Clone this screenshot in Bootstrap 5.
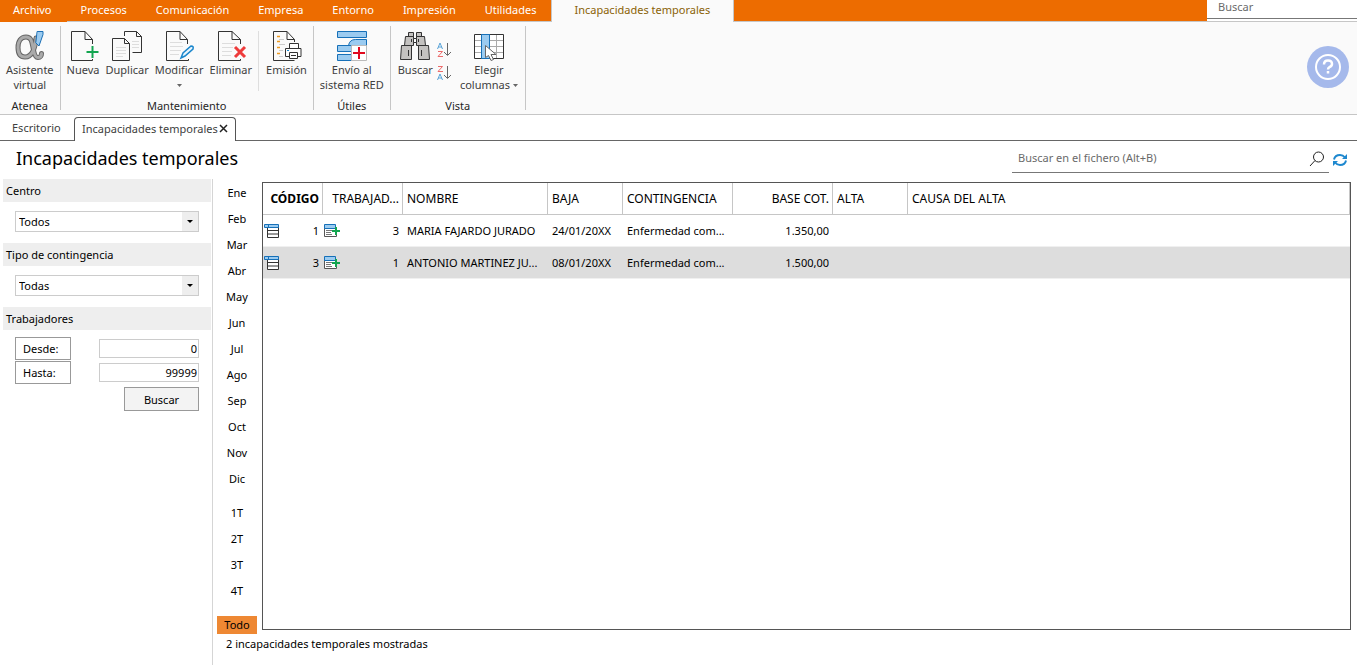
<!DOCTYPE html>
<html lang="es">
<head>
<meta charset="utf-8">
<meta name="viewport" content="width=device-width, initial-scale=1">
<title>Incapacidades temporales</title>
<link href="https://cdn.jsdelivr.net/npm/bootstrap@5.3.0/dist/css/bootstrap.min.css" rel="stylesheet">
<style>
:root { --naranja: #ed6c00; --linea: #c6c6c6; --oscuro: #666; --gris: #eee; }
body { font-family: "Noto Sans", "Open Sans", sans-serif; font-size: 11px; line-height: 15px; color: #000; background: #fff; }
button, input, select { font: inherit; color: inherit; }
button { background: none; border: 0; padding: 0; }
svg { display: block; flex: none; }

.menubar { height: 22px; background: var(--naranja); border-bottom: 1px solid var(--linea); }
.menubar .nav-link { color: #fff; line-height: 16px; padding: 2px 15px 3px 14px; height: 21px; }
.menubar .nav-link.archivo { background: var(--naranja); height: 22px; padding-left: 13px; }
.menubar .nav-link.active { background: #fafafa; color: #8a6206; padding: 2px 23px 3px 22px; height: 22px; border: 1px solid var(--linea); border-width: 0 1px; }
.global-box { width: 150px; background: #fff; }
.global-box input { width: 100%; height: 19px; border: 0; border-bottom: 1px solid #777; padding: 0 11px 5px; display: block; border-radius: 0; }
input::placeholder { color: #6a6a6a; opacity: 1; }

.ribbon { background: #fafafa; border-bottom: 1px solid var(--linea); padding: 4px 0; height: 93px; color: #404040; }
.rgroup { border-right: 1px solid var(--linea); height: 84px; padding: 0 3px; }
.rgroup.wide { padding: 0 4px; }
.rgroup .caption { color: #262626; line-height: 9px; }
.rbtn { display: flex; flex-direction: column; align-items: center; padding: 4px 3px 0; line-height: 15px; }
.rsep { width: 1px; height: 60px; background: #dedede; margin: 5px 4px 0 3px; }
.help { width: 42px; height: 42px; border-radius: 50%; background: #a5b9eb; margin: 0 8px 2px 0; }

.doc-tabs { height: 26px; border-bottom: 1px solid var(--oscuro); padding-top: 2px; color: #404040; }
.doc-tabs a { color: inherit; text-decoration: none; }
.doc-tabs .inactive { width: 74px; padding: 3px 0 0 12px; }
.doc-tabs .current { height: 24px; border: 1px solid #555; border-bottom: 0; border-radius: 4px 4px 0 0; background: #fff; padding: 0 7px 3px; gap: 1px; }

.titlebar { height: 38px; padding: 0 10px 0 16px; }
.titlebar h1 { font-size: 18px; line-height: 24px; margin: 0 0 4px; font-weight: 400; }
.file-search { width: 317px; height: 28px; border-bottom: 1px solid #777; margin-bottom: 2px; }
.file-search input { border: 0; outline: 0; padding: 0 6px 2px; background: none; }

.filters { width: 213px; border-right: 1px solid #d5d5d5; padding-left: 3px; }
.filters h2 { background: var(--gris); font-size: 11px; line-height: 23px; font-weight: 400; margin: 0; padding-left: 3px; margin-right: 1px; }
.filters h2 label { display: block; }
.block { padding: 9px 13px 11px 12px; }
.block.ranges { padding-top: 7px; gap: 1px; }
.combo { appearance: none; display: block; width: 100%; height: 21px; border: 1px solid #ccc; border-radius: 0; padding: 0 3px;
  background: url("data:image/svg+xml,%3Csvg xmlns='http://www.w3.org/2000/svg' width='16' height='19'%3E%3Cpath fill='%23eee' d='M0 0h16v19H0z'/%3E%3Cpath d='M5 8h6l-3 3z'/%3E%3C/svg%3E") right center no-repeat #fff; }
.framed { border: 1px solid #999; background: #fff; height: 23px; }
.framed.label-btn { width: 56px; text-align: left; padding-left: 7px; }
.framed.go { width: 75px; height: 24px; background: #f3f3f3; margin-top: 2px; }
.num { width: 100px; height: 19px; border: 1px solid #ccc; text-align: right; padding: 0 1px; border-radius: 0; }

.periods { width: 49px; padding: 5px 1px 0 0; margin-bottom: -4px; }
.periods button { width: 40px; height: 18px; margin-bottom: 8px; line-height: 18px; }
.periods .gap-after { margin-bottom: 16px; }
.periods .selected { background: #ee8833; margin-bottom: 0; }

.grid-box { border: 1px solid #555; margin: 3px 6px 0 0; }
.grid-box table { width: 100%; table-layout: fixed; border-collapse: separate; border-spacing: 0; }
.grid-box th, .grid-box td { height: 32px; padding: 0 4px; overflow: hidden; white-space: nowrap; text-overflow: ellipsis; }
.grid-box th { font-weight: 400; font-size: 12px; padding-right: 3px; border-right: 1px solid var(--linea); border-bottom: 1px solid var(--linea); }
.grid-box td { border-bottom: 1px solid #f0f0f0; }
.grid-box tr.marked td { background: #ddd; }
.grid-box td.with-icon { padding-left: 1px; }
.status { line-height: 15px; padding: 6px 0 14px 13px; }
</style>
</head>
<body class="d-flex flex-column vh-100 overflow-hidden">

<header class="menubar d-flex flex-shrink-0">
  <nav class="nav flex-nowrap flex-grow-1">
    <a class="nav-link archivo" href="#">Archivo</a>
    <a class="nav-link" href="#">Procesos</a>
    <a class="nav-link" href="#">Comunicación</a>
    <a class="nav-link" href="#">Empresa</a>
    <a class="nav-link" href="#">Entorno</a>
    <a class="nav-link" href="#">Impresión</a>
    <a class="nav-link" href="#">Utilidades</a>
    <a class="nav-link active" href="#" aria-current="page">Incapacidades temporales</a>
  </nav>
  <div class="global-box"><input type="search" placeholder="Buscar" aria-label="Buscar"></div>
</header>

<section class="ribbon d-flex flex-shrink-0" aria-label="Cinta de opciones">
  <div class="rgroup d-flex flex-column justify-content-between align-items-center">
    <button class="rbtn" type="button">
      <svg width="32" height="32" viewBox="0 0 32 32" fill="none" stroke-linecap="round">
        <path d="M22 8C21.500 18 18 27 11 27C6 27 4 23 4 17.500C4 11 7 7 12 7C18 7 18 13 19.500 20C20.500 25 21.500 27.500 24 27.500C26.500 27.500 27.500 25.500 27.500 23.500" stroke="#666" stroke-width="5"/>
        <path d="M22 8C21.500 18 18 27 11 27C6 27 4 23 4 17.500C4 11 7 7 12 7C18 7 18 13 19.500 20C20.500 25 21.500 27.500 24 27.500C26.500 27.500 27.500 25.500 27.500 23.500" stroke="#aaa" stroke-width="3"/>
        <path d="M23.500 1.500h5.500v3L25 16l-3-3z" fill="#9bcbf0" stroke="#1b6fb5"/>
      </svg>
      <span>Asistente<br>virtual</span>
    </button>
    <div class="caption">Atenea</div>
  </div>

  <div class="rgroup d-flex flex-column justify-content-between align-items-center">
    <div class="d-flex">
      <button class="rbtn" type="button">
        <svg width="32" height="32" viewBox="0 0 32 32" fill="none">
          <path d="M25.500 14V9.500L18 1.500H4.500v29h21V29M18 1.500v8h7.500" stroke="#333"/>
          <path d="M25.500 16v12M19.500 22h12" stroke="#13a550" stroke-width="2"/>
        </svg>Nueva
      </button>
      <button class="rbtn" type="button">
        <svg width="32" height="32" viewBox="0 0 32 32" fill="none">
          <path d="M13.500 6V1.500h12l5 5v16h-9M25.500 1.500v5h5M1.500 8.500h12l5 5v17h-17zM13.500 8.500v5h5" stroke="#333"/>
          <path d="M5 17.500h10M5 20.500h10M5 23.500h10M5 26.500h7M21 11.500h7M21 14.500h7M21 17.500h7" stroke="#ddd"/>
        </svg>Duplicar
      </button>
      <button class="rbtn" type="button">
        <svg width="32" height="32" viewBox="0 0 32 32" fill="none">
          <path d="M24.500 14V9.500L17 1.500H3.500v29h22V29M17 1.500v8h7.500" stroke="#333"/>
          <path d="M7 12.500h12M7 16.500h13M7 20.500h11M7 24.500h9" stroke="#ddd"/>
          <path d="M18 28l2-5 8-7q3 0 2 3l-8 7z" fill="#e8f4fc" stroke="#1a86cc" stroke-width="1.500"/>
        </svg>Modificar
        <svg width="5" height="15" viewBox="0 0 5 15"><path d="M0 7h5L2.500 10z" fill="#666"/></svg>
      </button>
      <button class="rbtn" type="button">
        <svg width="32" height="32" viewBox="0 0 32 32" fill="none">
          <path d="M25.500 14V9.500L17 1.500H3.500v29h22V29M17 1.500v8h8.500" stroke="#333"/>
          <path d="M7 13.500h13M7 17.500h11M7 21.500h10M7 25.500h9" stroke="#ddd"/>
          <path d="M20 17l10 10M30 17l-10 10" stroke="#ee3b3b" stroke-width="3"/>
        </svg>Eliminar
      </button>
      <div class="rsep"></div>
      <button class="rbtn" type="button">
        <svg width="32" height="32" viewBox="0 0 32 32" fill="none">
          <path d="M24.500 12V9.500L17 1.500H3.500v29h21M17 1.500v8h7.500" stroke="#333"/>
          <path d="M7 6.500h3M7 11.500h3M7 17.500h3M7 23.500h3" stroke="#ee9a20" stroke-width="1.500"/>
          <path d="M9 9.500h5M9 14.500h6M9 20.500h4M9 26.500h4" stroke="#ccc"/>
          <path d="M19.500 18v-4.500h9V18M19.500 26.500h-4v-8h15.500v8h-3M19.500 22.500h8v6h-8zM21 25.500h5" stroke="#333" fill="#fff"/>
          <path d="M17 20.500h2" stroke="#1a86cc"/>
        </svg>Emisión
      </button>
    </div>
    <div class="caption">Mantenimiento</div>
  </div>

  <div class="rgroup d-flex flex-column justify-content-between align-items-center">
    <button class="rbtn" type="button">
      <svg width="32" height="32" viewBox="0 0 32 32" fill="none">
        <path d="M1.500 1.500h29v6h-29zM12.500 15.500q1-6 7-6h11v7H16M1.500 15.500h15v6h-15zM1.500 24.500h14v6h-14z" fill="#9bcbf0" stroke="#1670b8"/>
        <path d="M15.500 15.500h15v15h-15z" fill="#fff" stroke="#bbb"/>
        <path d="M23 17v12M17 23h12" stroke="#e10a1e" stroke-width="2"/>
      </svg>
      <span>Envío al<br>sistema RED</span>
    </button>
    <div class="caption">Útiles</div>
  </div>

  <div class="rgroup wide d-flex flex-column justify-content-between align-items-center">
    <div class="d-flex">
      <button class="rbtn" type="button">
        <svg width="32" height="32" viewBox="0 0 32 32" fill="#c4c2c0" stroke="#333">
          <path d="M9.500 2.500h5v4h-5zM17.500 2.500h5v4h-5zM6.500 6.500h8v9h-9zM17.500 6.500h8l1 9h-9z"/>
          <path d="M14.500 8.500h3v4h-3z" fill="#fff"/>
          <path d="M2.500 15.500h10v14h-11zM19.500 15.500h10l1 14h-11z"/>
          <path d="M12.500 9v3M19.500 9v3M9.500 20v6M22.500 20v6"/>
        </svg>Buscar
      </button>
      <div class="d-flex flex-column">
        <button class="mt-3" type="button" aria-label="Orden ascendente">
          <svg width="17" height="16" viewBox="0 0 17 16" fill="none">
            <path d="M1.500 7L4 1l2.500 6M2 5h4" stroke="#5ba4d8"/><path d="M2 9.500h4.500l-4.500 5h5" stroke="#ec6b6b"/>
            <path d="M11.500 1v12M8 10l3.500 3.500L15 10" stroke="#666"/>
          </svg>
        </button>
        <button class="mt-2" type="button" aria-label="Orden descendente">
          <svg width="17" height="16" viewBox="0 0 17 16" fill="none">
            <path d="M2 .5h4.500l-4.500 5h5" stroke="#ec6b6b"/><path d="M1.500 14L4 8l2.500 6M2 12h4" stroke="#5ba4d8"/>
            <path d="M11.500 0v12M8 9l3.500 3.500L15 9" stroke="#666"/>
          </svg>
        </button>
      </div>
      <button class="rbtn ms-1" type="button">
        <svg width="32" height="32" viewBox="0 0 32 32" fill="none">
          <path d="M1.500 4.500h29v24h-29z" fill="#fff"/>
          <path d="M2 10.500h28M2 16.500h28M2 22.500h28M16.500 5v23M23.500 5v23" stroke="#aaa"/>
          <path d="M1.500 4.500h29v24h-29z" stroke="#333"/>
          <path d="M8.500 4.500h8v24h-8z" fill="#9bcbf0" stroke="#1670b8"/>
          <path d="M12.500 15.500v12l3-2 2.500 5 2.500-1-2.500-5h5z" fill="#fff" stroke="#666"/>
        </svg>
        <span class="text-nowrap">Elegir<br>columnas <svg class="d-inline-block" width="5" height="6" viewBox="0 0 5 6"><path d="M0 1h5L2.500 4z" fill="#666"/></svg></span>
      </button>
    </div>
    <div class="caption">Vista</div>
  </div>

  <button class="help ms-auto align-self-center" type="button" aria-label="Ayuda">
    <svg width="42" height="42" viewBox="0 0 42 42" fill="none" stroke="#fff" stroke-width="2">
      <circle cx="21" cy="21" r="12"/>
      <path d="M17 18.500q0-4 4-4t4 3.500q0 2-2.500 3.200-1.500.8-1.500 2.300" stroke-width="2.500"/>
      <path d="M21 25v2.500" stroke-width="2.500"/>
    </svg>
  </button>
</section>

<nav class="doc-tabs d-flex flex-shrink-0" aria-label="Ventanas abiertas">
  <a class="inactive" href="#">Escritorio</a>
  <div class="current d-flex align-items-center text-nowrap">
    <a href="#">Incapacidades temporales</a>
    <button type="button" aria-label="Cerrar"><svg width="9" height="9" viewBox="0 0 9 9"><path d="M1 1l7 7M8 1L1 8" stroke="#222" stroke-width="1.500"/></svg></button>
  </div>
</nav>

<div class="titlebar d-flex align-items-center flex-shrink-0">
  <h1>Incapacidades temporales</h1>
  <div class="file-search d-flex align-items-center ms-auto">
    <input class="flex-grow-1" type="search" placeholder="Buscar en el fichero (Alt+B)" aria-label="Buscar en el fichero">
    <button class="me-1" type="button" aria-label="Buscar"><svg width="16" height="16" viewBox="0 0 16 16" fill="none" stroke="#222"><circle cx="9.500" cy="6" r="5"/><path d="M6 9.500L1 15"/></svg></button>
  </div>
  <button class="ms-1" type="button" aria-label="Actualizar">
    <svg width="14" height="14" viewBox="0 0 14 14" fill="none" stroke="#1e88cf" stroke-width="2"><path d="M1 6.500Q2 2 7 2q3 0 5 2.500M13 7.500Q12 12 7 12q-3 0-5-2.500"/><path d="M14 1v5H9zM0 13V8h5z" fill="#1e88cf" stroke="none"/></svg>
  </button>
</div>

<main class="d-flex flex-grow-1">
  <aside class="filters flex-shrink-0">
    <h2><label for="centro">Centro</label></h2>
    <div class="block"><select class="combo" id="centro"><option>Todos</option></select></div>
    <h2><label for="tipo">Tipo de contingencia</label></h2>
    <div class="block"><select class="combo" id="tipo"><option>Todas</option></select></div>
    <h2>Trabajadores</h2>
    <div class="block ranges d-flex flex-column">
      <div class="d-flex justify-content-between align-items-center">
        <button class="framed label-btn" type="button" id="l-desde">Desde:</button>
        <input class="num" type="text" value="0" aria-labelledby="l-desde">
      </div>
      <div class="d-flex justify-content-between align-items-center">
        <button class="framed label-btn" type="button" id="l-hasta">Hasta:</button>
        <input class="num" type="text" value="99999" aria-labelledby="l-hasta">
      </div>
      <button class="framed go align-self-end" type="button">Buscar</button>
    </div>
  </aside>

  <div class="flex-grow-1 d-flex flex-column">
    <div class="d-flex flex-grow-1">
      <div class="periods d-flex flex-column align-items-center flex-shrink-0">
        <button type="button">Ene</button>
        <button type="button">Feb</button>
        <button type="button">Mar</button>
        <button type="button">Abr</button>
        <button type="button">May</button>
        <button type="button">Jun</button>
        <button type="button">Jul</button>
        <button type="button">Ago</button>
        <button type="button">Sep</button>
        <button type="button">Oct</button>
        <button type="button">Nov</button>
        <button type="button" class="gap-after">Dic</button>
        <button type="button">1T</button>
        <button type="button">2T</button>
        <button type="button">3T</button>
        <button type="button" class="gap-after">4T</button>
        <button type="button" class="selected">Todo</button>
      </div>
      <div class="grid-box flex-grow-1">
        <table>
          <colgroup><col width="60"><col width="80"><col width="145"><col width="75"><col width="110"><col width="100"><col width="75"><col></colgroup>
          <thead>
            <tr><th class="fw-bold text-end">CÓDIGO</th><th class="text-end">TRABAJAD...</th><th>NOMBRE</th><th>BAJA</th><th>CONTINGENCIA</th><th class="text-end">BASE COT.</th><th>ALTA</th><th>CAUSA DEL ALTA</th></tr>
          </thead>
          <tbody>
            <tr>
              <td class="with-icon"><div class="d-flex justify-content-between align-items-center"><svg width="16" height="16" viewBox="0 0 16 16"><path d="M3.500 4v10.500h11V4M3 7.500h11M3 11h11" fill="#fff" stroke="#333"/><path d="M.5 1.500h14v3H.5zM4.500 2v2" fill="#9bcbf0" stroke="#1670b8"/></svg>1</div></td>
              <td class="with-icon"><div class="d-flex justify-content-between align-items-center"><svg width="17" height="16" viewBox="0 0 17 16"><path d="M.5 5v8.500h12V5" fill="#fff" stroke="#555"/><path d="M.5 1.500h11v4H.5z" fill="#9bcbf0" stroke="#1670b8"/><path d="M2 7.500h6M2 9.500h5M2 11.500h6" stroke="#777"/><path d="M12 4v8M8 8h8" stroke="#13a550" stroke-width="2"/></svg>3</div></td>
              <td>MARIA FAJARDO JURADO</td><td>24/01/20XX</td><td>Enfermedad com...</td><td class="text-end">1.350,00</td><td></td><td></td>
            </tr>
            <tr class="marked">
              <td class="with-icon"><div class="d-flex justify-content-between align-items-center"><svg width="16" height="16" viewBox="0 0 16 16"><path d="M3.500 4v10.500h11V4M3 7.500h11M3 11h11" fill="#fff" stroke="#333"/><path d="M.5 1.500h14v3H.5zM4.500 2v2" fill="#9bcbf0" stroke="#1670b8"/></svg>3</div></td>
              <td class="with-icon"><div class="d-flex justify-content-between align-items-center"><svg width="17" height="16" viewBox="0 0 17 16"><path d="M.5 5v8.500h12V5" fill="#fff" stroke="#555"/><path d="M.5 1.500h11v4H.5z" fill="#9bcbf0" stroke="#1670b8"/><path d="M2 7.500h6M2 9.500h5M2 11.500h6" stroke="#777"/><path d="M12 4v8M8 8h8" stroke="#13a550" stroke-width="2"/></svg>1</div></td>
              <td>ANTONIO MARTINEZ JU...</td><td>08/01/20XX</td><td>Enfermedad com...</td><td class="text-end">1.500,00</td><td></td><td></td>
            </tr>
          </tbody>
        </table>
      </div>
    </div>
    <div class="status">2 incapacidades temporales mostradas</div>
  </div>
</main>

<script src="https://cdn.jsdelivr.net/npm/bootstrap@5.3.0/dist/js/bootstrap.bundle.min.js"></script>
</body>
</html>
